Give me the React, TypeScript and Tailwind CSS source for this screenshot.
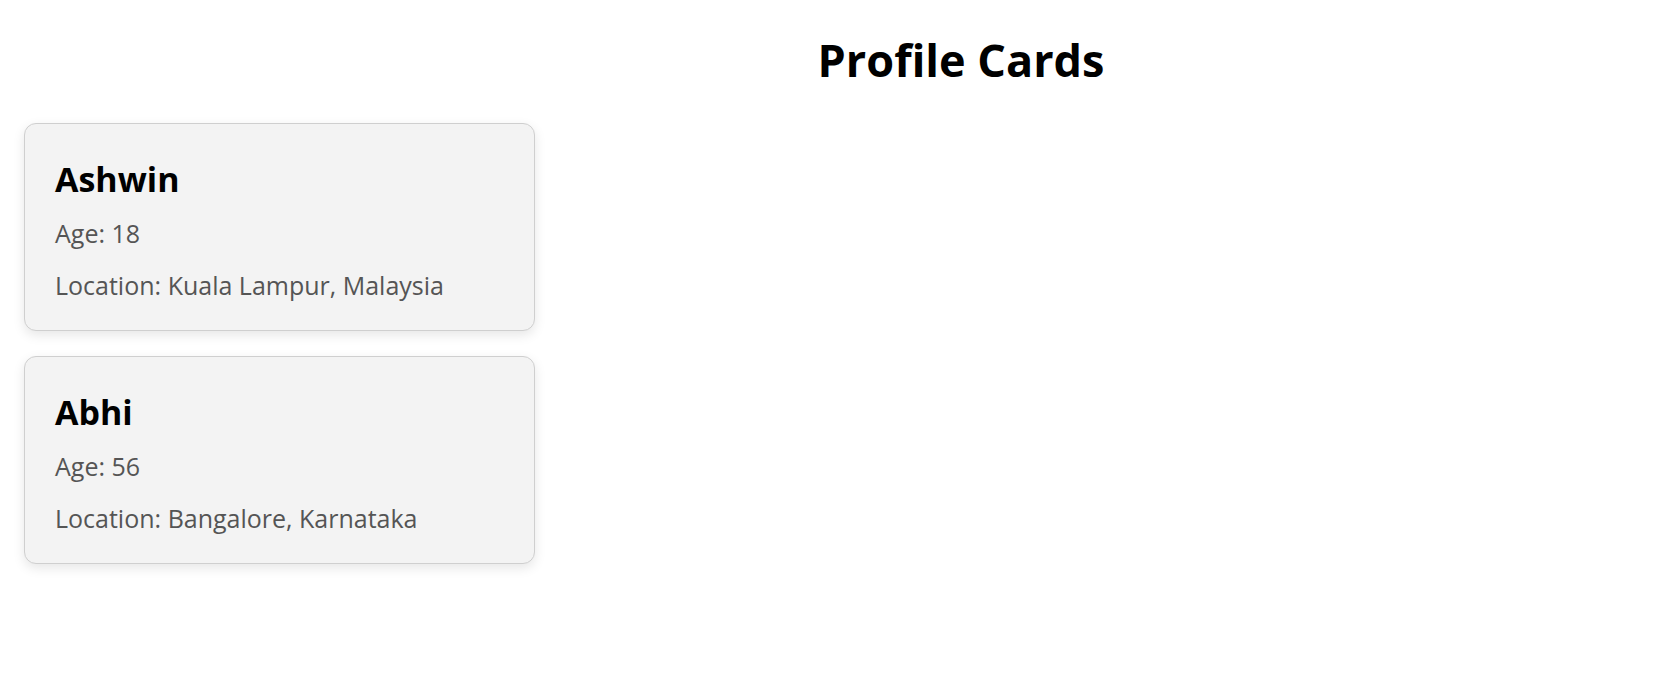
const profiles = [
  { name: 'Ashwin', age: 18, location: 'Kuala Lampur, Malaysia' },
  { name: 'Abhi', age: 56, location: 'Bangalore, Karnataka' },
]

function ProfileCard({ name, age, location }: { name: string; age: number; location: string }) {
  return (
    <div className="w-[511px] rounded-[12px] border border-[#cfcfcf] bg-[#f3f3f3] pl-[30px] pr-[30px] pt-[31px] pb-[29px] shadow-[0_4px_12px_rgba(0,0,0,0.1)]">
      <h2 className="text-[34px] leading-[48px] font-bold text-black">{name}</h2>
      <p className="mt-[14px] text-[25px] leading-[32px] text-[#555]">Age: {age}</p>
      <p className="mt-[20px] text-[25px] leading-[32px] text-[#555]">Location: {location}</p>
    </div>
  )
}

export default function App() {
  return (
    <div className="min-h-screen bg-white font-['Open_Sans',sans-serif]">
      <div className="pl-[256px] pt-[28px]">
        <h1 className="text-center text-[45px] leading-[63px] font-bold text-black">Profile Cards</h1>
      </div>
      <div className="flex flex-col gap-[25px] pl-[24px] pt-[32px]">
        {profiles.map((p) => (
          <ProfileCard key={p.name} {...p} />
        ))}
      </div>
    </div>
  )
}
